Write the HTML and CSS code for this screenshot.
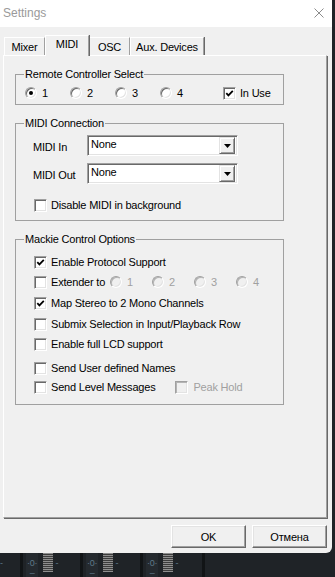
FILE: index.html
```html
<!DOCTYPE html>
<html>
<head>
  <meta charset="UTF-8">
  <title>Settings</title>
  <link rel="stylesheet" href="styles.css">
</head>
<body>
  <div class="window">
    <div class="titlebar">
      <span class="title">Settings</span>
      <svg class="close" width="10" height="10" viewBox="0 0 10 10"><path d="M0.5 0.5 L9.5 9.5 M9.5 0.5 L0.5 9.5" stroke="#8c8c8c" stroke-width="1" fill="none"/></svg>
    </div>

    <div class="tabs">
      <div class="tab tab-mixer">Mixer</div>
      <div class="tab tab-midi active">MIDI</div>
      <div class="tab tab-osc">OSC</div>
      <div class="tab tab-aux">Aux. Devices</div>
    </div>

    <div class="panel">
      <!-- Remote controller -->
      <fieldset class="group remote">
        <legend>Remote Controller Select</legend>
        <div class="radio-row">
          <label class="opt"><span class="radio checked"></span>1</label>
          <label class="opt"><span class="radio"></span>2</label>
          <label class="opt"><span class="radio"></span>3</label>
          <label class="opt"><span class="radio"></span>4</label>
          <label class="opt in-use"><span class="check"><svg width="9" height="9" viewBox="0 0 9 9"><path d="M1.3 4.2 L3.4 6.4 L7.8 1.9" stroke="#000" stroke-width="1.8" fill="none"/></svg></span>In Use</label>
        </div>
      </fieldset>

      <!-- MIDI ports -->
      <fieldset class="group connection">
        <legend>MIDI Connection</legend>
        <div class="port-row">
          <span class="port-label">MIDI In</span>
          <div class="select"><span class="value">None</span><span class="drop"><svg width="7" height="4" viewBox="0 0 7 4"><path d="M0 0 H7 L3.5 4 Z" fill="#000"/></svg></span></div>
        </div>
        <div class="port-row">
          <span class="port-label">MIDI Out</span>
          <div class="select"><span class="value">None</span><span class="drop"><svg width="7" height="4" viewBox="0 0 7 4"><path d="M0 0 H7 L3.5 4 Z" fill="#000"/></svg></span></div>
        </div>
        <label class="check-row bg-row"><span class="check"></span>Disable MIDI in background</label>
      </fieldset>

      <!-- Mackie options -->
      <fieldset class="group mackie">
        <legend>Mackie Control Options</legend>
        <label class="check-row r-first"><span class="check"><svg width="9" height="9" viewBox="0 0 9 9"><path d="M1.3 4.2 L3.4 6.4 L7.8 1.9" stroke="#000" stroke-width="1.8" fill="none"/></svg></span>Enable Protocol Support</label>
        <div class="check-row r-tight">
          <label class="ext-label"><span class="check"></span>Extender to</label>
          <div class="ext-radios">
            <span class="opt disabled"><span class="radio"></span>1</span>
            <span class="opt disabled"><span class="radio"></span>2</span>
            <span class="opt disabled"><span class="radio"></span>3</span>
            <span class="opt disabled"><span class="radio"></span>4</span>
          </div>
        </div>
        <label class="check-row"><span class="check"><svg width="9" height="9" viewBox="0 0 9 9"><path d="M1.3 4.2 L3.4 6.4 L7.8 1.9" stroke="#000" stroke-width="1.8" fill="none"/></svg></span>Map Stereo to 2 Mono Channels</label>
        <label class="check-row"><span class="check"></span>Submix Selection in Input/Playback Row</label>
        <label class="check-row r-tight"><span class="check"></span>Enable full LCD support</label>
        <label class="check-row r-gap"><span class="check"></span>Send User defined Names</label>
        <div class="check-row r-last">
          <label class="level-label"><span class="check"></span>Send Level Messages</label>
          <label class="peak disabled"><span class="check"></span>Peak Hold</label>
        </div>
      </fieldset>
    </div>

    <div class="buttons">
      <button class="btn">OK</button>
      <button class="btn">Отмена</button>
    </div>
  </div>

  <!-- mixer strips peeking below the dialog -->
  <div class="mixer">
    <div class="strip"><span class="tick first">-</span><span class="sep"></span><span class="scale"><span>·0·</span><span>–</span></span><span class="knob"></span><span class="tick">-</span></div>
    <div class="strip"><span class="tick first"></span><span class="sep"></span><span class="scale"><span>·0·</span><span>–</span></span><span class="knob"></span><span class="tick">-</span></div>
    <div class="strip"><span class="tick first"></span><span class="sep"></span><span class="scale"><span>·0·</span><span>–</span></span><span class="knob"></span><span class="tick">-</span></div>
    <div class="strip last"><span class="tick first"></span><span class="sep"></span></div>
  </div>
</body>
</html>
```

FILE: styles.css
```css
/* Base */
body {
  margin: 0;
  width: 335px;
  height: 577px;
  overflow: hidden;
  background: #1f2327;
  font-family: "Liberation Sans", Arial, sans-serif;
  font-size: 11px;
  letter-spacing: -0.2px;
  color: #000;
  display: flex;
  flex-direction: column;
}
.window {
  width: 332px;
  height: 553px;
  flex: none;
  background: #f0f0f0;
  border-bottom-right-radius: 6px;
  display: flex;
  flex-direction: column;
}
/* Title bar */
.titlebar {
  height: 27px;
  background: #fff;
  display: flex;
  align-items: center;
  justify-content: space-between;
  padding: 0 8px 0 3px;
  box-sizing: border-box;
}
.title {
  font-size: 12px;
  letter-spacing: 0;
  color: #9a9a9a;
  margin-top: -1px;
}
.close {
  margin-top: -2px;
}
/* Tabs */
.tabs {
  margin-top: 8px;
  height: 20px;
  padding-left: 4px;
  display: flex;
  align-items: flex-end;
}
.tab {
  height: 18px;
  box-sizing: border-box;
  padding-top: 3px;
  line-height: 13px;
  text-align: center;
  border-top: 1px solid #fff;
  border-left: 1px solid #fff;
  border-right: 1px solid #a0a0a0;
  box-shadow: 1px 0 0 #696969;
}
.tab-mixer { width: 41px; }
.tab-midi { width: 44px; }
.tab-osc { width: 41px; }
.tab-aux { width: 74px; }
.tab.active {
  height: 21px;
  margin-bottom: -1px;
  padding-top: 2px;
  background: #f0f0f0;
  position: relative;
  z-index: 1;
}
/* Tab page */
.panel {
  margin-left: 3px;
  width: 324px;
  height: 463px;
  box-sizing: border-box;
  border-top: 1px solid #fff;
  border-left: 1px solid #fff;
  border-right: 1px solid #a0a0a0;
  border-bottom: 1px solid #a0a0a0;
  box-shadow: 1px 1px 0 #696969;
  padding: 12px 0 0 11px;
  display: flex;
  flex-direction: column;
}
/* Group boxes */
.group {
  margin: 0;
  width: 269px;
  box-sizing: border-box;
  border: 1px solid #a0a0a0;
  padding: 0;
  min-width: 0;
}
.group legend {
  margin-left: 8px;
  padding: 0 1px;
  line-height: 13px;
}
.remote {
  padding: 5px 0 4px 9px;
}
.remote legend {
  margin-left: -1px;
}
.connection {
  margin-top: 12px;
  padding: 5px 0 8px 0;
}
.mackie {
  margin-top: 12px;
  padding: 9px 0 10px 0;
}
/* Radios and checkboxes */
.opt {
  display: flex;
  align-items: center;
  height: 14px;
  line-height: 14px;
}
.radio {
  width: 12px;
  height: 12px;
  box-sizing: border-box;
  border-radius: 50%;
  background: #fff;
  border: 1px solid;
  border-color: #a0a0a0 #fff #fff #a0a0a0;
  box-shadow: inset 1px 1px 0 #696969, inset -1px -1px 0 #e3e3e3;
  display: inline-flex;
  align-items: center;
  justify-content: center;
  margin-right: 5px;
  flex: none;
}
.radio.checked::after {
  content: "";
  width: 4px;
  height: 4px;
  border-radius: 50%;
  background: #000;
}
.check {
  width: 13px;
  height: 13px;
  box-sizing: border-box;
  background: #fff;
  border: 1px solid;
  border-color: #a0a0a0 #fff #fff #a0a0a0;
  box-shadow: inset 1px 1px 0 #696969, inset -1px -1px 0 #e3e3e3;
  display: inline-flex;
  align-items: center;
  justify-content: center;
  margin-right: 4px;
  flex: none;
}
.disabled {
  color: #a0a0a0;
}
.disabled .radio,
.disabled .check {
  background: #f0f0f0;
  box-shadow: inset 1px 1px 0 #b4b4b4, inset -1px -1px 0 #e3e3e3;
}
.radio-row {
  display: flex;
}
.radio-row .opt {
  width: 45px;
}
.radio-row .in-use {
  margin-left: 18px;
  width: auto;
}
/* MIDI ports */
.port-row {
  display: flex;
  align-items: center;
  height: 21px;
  padding-left: 17px;
}
.port-row + .port-row {
  margin-top: 7px;
}
.port-label {
  width: 54px;
  padding-top: 3px;
}
.select {
  width: 151px;
  height: 21px;
  box-sizing: border-box;
  background: #fff;
  border: 1px solid;
  border-color: #a0a0a0 #fff #fff #a0a0a0;
  box-shadow: inset 1px 1px 0 #696969, inset -1px -1px 0 #e3e3e3;
  display: flex;
  align-items: center;
  justify-content: space-between;
  padding: 2px;
}
.select .value {
  padding-left: 1px;
  margin-top: -3px;
}
.drop {
  width: 16px;
  height: 17px;
  box-sizing: border-box;
  background: #f0f0f0;
  border: 1px solid;
  border-color: #e3e3e3 #696969 #696969 #e3e3e3;
  box-shadow: inset 1px 1px 0 #fff, inset -1px -1px 0 #a0a0a0;
  display: flex;
  align-items: center;
  justify-content: center;
}
/* Checkbox rows */
.check-row {
  display: flex;
  align-items: center;
  height: 14px;
  line-height: 14px;
  padding-left: 18px;
  margin-top: 7px;
}
.r-first { margin-top: 0; }
.bg-row { margin-top: 14px; }
.r-tight { margin-top: 6px; }
.r-gap { margin-top: 10px; }
.r-last { margin-top: 5px; }
.ext-label,
.level-label {
  display: flex;
  align-items: center;
}
.ext-radios {
  display: flex;
  margin-left: 5px;
}
.ext-radios .opt {
  width: 42px;
}
.peak {
  display: flex;
  align-items: center;
  margin-left: 20px;
}
.peak .check {
  margin-right: 5px;
}
/* Dialog buttons */
.buttons {
  display: flex;
  justify-content: flex-end;
  gap: 6px;
  margin-top: 7px;
  padding-right: 5px;
}
.btn {
  width: 75px;
  height: 23px;
  box-sizing: border-box;
  font-family: "Liberation Sans", Arial, sans-serif;
  font-size: 11px;
  letter-spacing: -0.2px;
  color: #000;
  background: #f0f0f0;
  border: 1px solid;
  border-color: #fff #696969 #696969 #fff;
  box-shadow: inset -1px -1px 0 #a0a0a0, inset 1px 1px 0 #e3e3e3;
  padding: 0;
}
/* Mixer strips below */
.mixer {
  height: 24px;
  display: flex;
}
.strip {
  width: 60px;
  display: flex;
  flex: none;
}
.tick {
  width: 22px;
  color: #5d7888;
  font-size: 9px;
  line-height: 20px;
}
.strip .tick:last-child {
  width: 5px;
  padding-left: 2px;
}
.sep {
  width: 3px;
  background: #111416;
  margin-right: 3px;
}
.scale {
  width: 14px;
  background: #252a2f;
  display: flex;
  flex-direction: column;
  align-items: center;
  color: #5d7888;
  font-size: 9px;
  line-height: 10px;
  padding-top: 5px;
  margin-right: 5px;
}
.knob {
  width: 11px;
  height: 19px;
  background: repeating-linear-gradient(#8e8e8e 0 1px, #3c3c3c 1px 2px);
}
```
